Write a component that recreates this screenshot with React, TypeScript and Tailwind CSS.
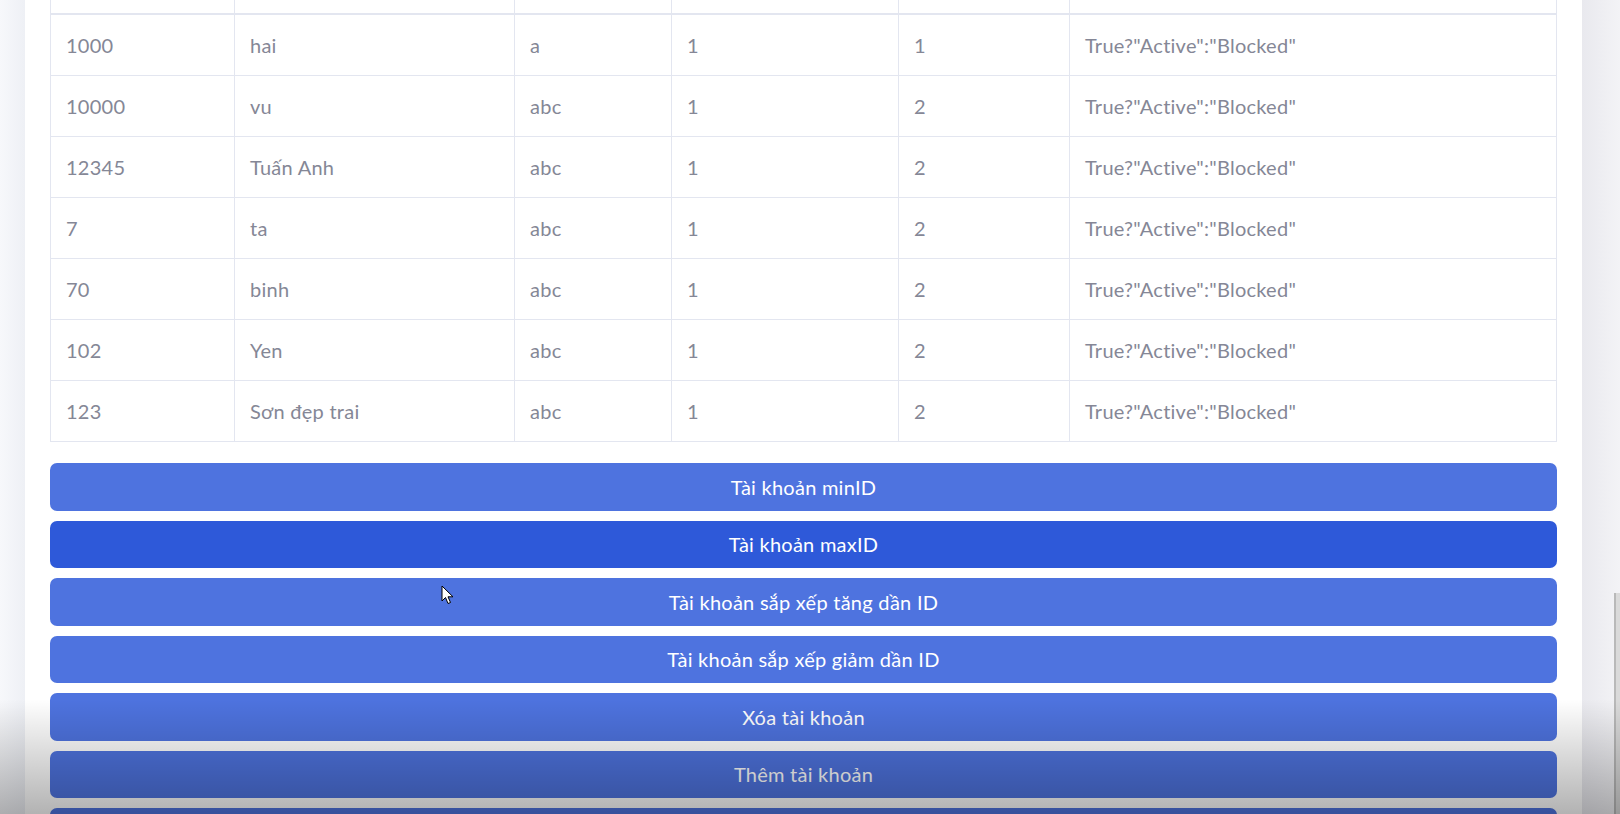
const rows = [
  { id: '1000', name: 'hai', pass: 'a', a: '1', b: '1' },
  { id: '10000', name: 'vu', pass: 'abc', a: '1', b: '2' },
  { id: '12345', name: 'Tuấn Anh', pass: 'abc', a: '1', b: '2' },
  { id: '7', name: 'ta', pass: 'abc', a: '1', b: '2' },
  { id: '70', name: 'binh', pass: 'abc', a: '1', b: '2' },
  { id: '102', name: 'Yen', pass: 'abc', a: '1', b: '2' },
  { id: '123', name: 'Sơn đẹp trai', pass: 'abc', a: '1', b: '2' },
];

// last one is scrolled below the fold, its label isn't visible
const buttons = [
  { label: 'Tài khoản minID', active: false },
  { label: 'Tài khoản maxID', active: true },
  { label: 'Tài khoản sắp xếp tăng dần ID', active: false },
  { label: 'Tài khoản sắp xếp giảm dần ID', active: false },
  { label: 'Xóa tài khoản', active: false },
  { label: 'Thêm tài khoản', active: false },
  { label: '', active: false },
];

const td = 'border border-[#e3e6f0] px-[15px] py-[15px] leading-[30px] text-left font-normal';

export default function App() {
  return (
    <div
      className="relative h-[814px] w-full overflow-hidden bg-[#f4f5f9] text-[20px] tracking-[0.25px] text-[#858796]"
      style={{ fontFamily: 'Lato, "Noto Sans", sans-serif' }}
    >
      <div className="flex h-full">
        <div className="w-[25px] shrink-0 bg-gradient-to-r from-[#f7f8fb] to-[#eef0f5]" />
        <div className="flex-1 bg-white px-[25px]">
          <table className="w-full table-fixed border-collapse">
            <colgroup>
              <col className="w-[184px]" />
              <col className="w-[280px]" />
              <col className="w-[157px]" />
              <col className="w-[227px]" />
              <col className="w-[171px]" />
              <col />
            </colgroup>
            <thead>
              <tr>
                {Array.from({ length: 6 }).map((_, i) => (
                  <th key={i} className="h-[14px] border-x border-b-2 border-[#e3e6f0] p-0" />
                ))}
              </tr>
            </thead>
            <tbody>
              {rows.map((r) => (
                <tr key={r.id}>
                  <td className={td}>{r.id}</td>
                  <td className={td}>{r.name}</td>
                  <td className={td}>{r.pass}</td>
                  <td className={td}>{r.a}</td>
                  <td className={td}>{r.b}</td>
                  <td className={td}>True?"Active":"Blocked"</td>
                </tr>
              ))}
            </tbody>
          </table>

          <div className="mt-[21px] flex flex-col gap-[10px]">
            {buttons.map((b, i) => (
              <button
                key={i}
                className={
                  b.active
                    ? 'h-[47.5px] w-full rounded-[7px] bg-[#2e59d9] text-[20px] text-white'
                    : 'h-[47.5px] w-full rounded-[7px] bg-[#4e73df] text-[20px] text-white'
                }
              >
                {b.label}
              </button>
            ))}
          </div>
        </div>
        <div className="flex w-[38px] shrink-0 bg-gradient-to-r from-[#e9e9ee] to-[#f3f3f6]" />
      </div>

      {/* scrollbar thumb */}
      <div className="absolute right-0 top-[593px] h-[221px] w-[6px] border-l-2 border-[#b9b9b9] bg-[#dadada]" />

      {/* mouse cursor */}
      <svg className="absolute left-[441px] top-[585px]" width="14" height="21" viewBox="0 0 14 21">
        <path d="M1 1 L1 16 L4.5 12.5 L7 18.5 L9.5 17.5 L7 11.8 L12 11.8 Z" fill="white" stroke="black" strokeWidth="1" strokeLinejoin="round" />
      </svg>

      {/* video shade at the bottom */}
      <div className="pointer-events-none absolute inset-x-0 bottom-0 h-[115px] bg-gradient-to-b from-transparent to-black/30" />
    </div>
  );
}
